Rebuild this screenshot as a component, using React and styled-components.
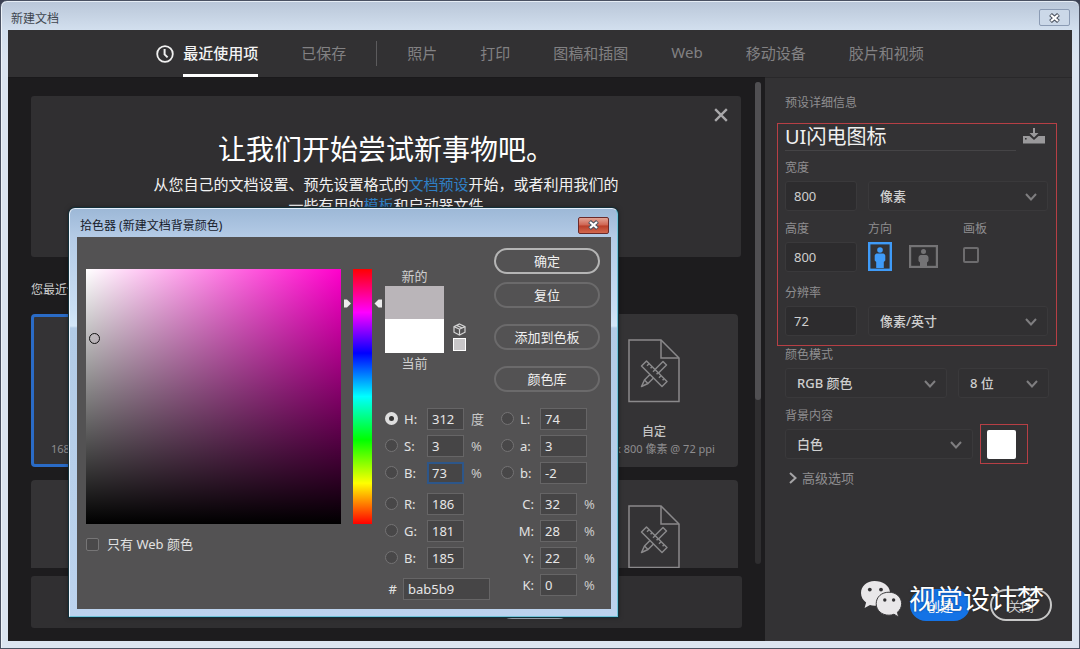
import React from "react";
import styled, { createGlobalStyle, css } from "styled-components";

const GlobalStyle = createGlobalStyle`
  * {
    box-sizing: border-box;
  }
  body {
    margin: 0;
    background: #3b4052;
    font-family: "Noto Sans", "Noto Sans CJK SC", sans-serif;
    font-size: 12px;
  }
  button, input, select {
    font-family: inherit;
    margin: 0;
  }
  button {
    padding: 0;
    cursor: pointer;
  }
  h1, h2, p {
    margin: 0;
    font-weight: 400;
  }
`;

const Window = styled.div`
  position: relative;
  display: flex;
  flex-direction: column;
  height: 100vh;
  padding: 0 7px 7px;
  border: 1px solid #4a5162;
  border-radius: 7px 7px 0 0;
  background: linear-gradient(#b9c6d8 0px, #d2dfee 29px, #dbe4f0 60px);
  box-shadow: inset 0 1px 0 #e6edf5, inset 1px 0 0 #eef3f9;
`;

const TitleBar = styled.header`
  display: flex;
  flex-shrink: 0;
  align-items: center;
  justify-content: space-between;
  height: 29px;
  padding: 4px 2px 0 3px;
  color: #40464f;
`;

const WindowClose = styled.button`
  display: flex;
  align-items: center;
  justify-content: center;
  width: 31px;
  height: 17px;
  border: 1px solid #8b9bb4;
  border-radius: 2px;
  background: #cbd8e8;
`;

const Tabs = styled.nav`
  display: flex;
  flex-shrink: 0;
  justify-content: center;
  align-items: stretch;
  gap: 43px;
  height: 47px;
  background: #323133;
`;

const Tab = styled.a`
  display: flex;
  align-items: center;
  border-bottom: 3px solid transparent;
  color: #828183;
  font-size: 15px;
  text-decoration: none;
  white-space: nowrap;
  ${(props) =>
    props.$active &&
    css`
      color: #f4f4f4;
      font-weight: 500;
      border-bottom-color: #fff;
    `}
`;

const ActiveTab = styled.div`
  display: flex;
  gap: 9px;
  & > svg {
    align-self: center;
  }
`;

const Divider = styled.span`
  align-self: center;
  width: 1px;
  height: 25px;
  margin: 0 -13px;
  background: #5c5b5d;
`;

const Body = styled.div`
  display: grid;
  grid-template-columns: 1fr 307px;
  flex: 1;
  min-height: 0;
`;

const Main = styled.main`
  display: flex;
  flex-direction: column;
  min-height: 0;
  padding: 0 0 13px 23px;
  border-top: 1px solid #1a191b;
  background: #1d1c1e;
`;

const ListArea = styled.div`
  display: flex;
  flex: 1;
  min-height: 0;
`;

const List = styled.div`
  flex: 1;
  overflow: hidden;
  padding-top: 18px;
`;

const ScrollTrack = styled.div`
  width: 6px;
  margin: 4px 4px 4px 14px;
  border-radius: 3px;
  background: #2f2e30;
`;

const ScrollThumb = styled.div`
  height: 66%;
  border-radius: 3px;
  background: #504f52;
`;

const Banner = styled.section`
  position: relative;
  height: 161px;
  padding-top: 32px;
  border-radius: 3px;
  background: #302f31;
  color: #f2f2f2;
  text-align: center;
`;

const BannerTitle = styled.h1`
  font-size: 28px;
  line-height: 42px;
  color: #fff;
`;

const BannerText = styled.p`
  width: 500px;
  margin: 4px auto 0;
  font-size: 15px;
  line-height: 21px;
  a {
    color: #2f7fc4;
    text-decoration: none;
  }
`;

const BannerClose = styled.button`
  position: absolute;
  top: 12px;
  right: 13px;
  display: flex;
  border: 0;
  background: none;
`;

const RecentTitle = styled.h2`
  margin: 23px 0 14px;
  color: #cfcfcf;
  font-size: 12px;
  line-height: 20px;
`;

const Cards = styled.div`
  display: grid;
  grid-template-columns: repeat(4, 1fr);
  gap: 13px 12px;
  margin-right: 3px;
`;

const Card = styled.button`
  display: flex;
  flex-direction: column;
  align-items: center;
  height: 153px;
  padding-top: ${(props) => (props.$selected ? "22px" : "25px")};
  border: ${(props) => (props.$selected ? "3px solid #2a6bc6" : "0")};
  border-radius: 4px;
  background: #343335;
  color: #8e8d8f;
  font-size: 12px;
  white-space: nowrap;
`;

const CardName = styled.span`
  margin-top: 20px;
  color: #c4c4c4;
  font-weight: 500;
  line-height: 18px;
`;

const CardSize = styled.span`
  line-height: 16px;
  font-size: 11px;
`;

const TemplateBar = styled.form`
  display: flex;
  align-items: center;
  justify-content: flex-end;
  height: 52px;
  margin: 8px 23px 0 0;
  padding-right: 167px;
  border-radius: 3px;
  background: #302f31;
`;

const GoButton = styled.button`
  width: 80px;
  height: 34px;
  border: 2px solid #a9b3bd;
  border-radius: 17px;
  background: none;
  color: #ccc;
`;

const Panel = styled.aside`
  display: flex;
  flex-direction: column;
  padding-top: 16px;
  border-top: 1px solid #29282a;
  background: #333234;
  color: #8f8e90;
`;

const PanelHeading = styled.h2`
  padding: 0 20px;
  font-size: 12px;
  line-height: 18px;
`;

const Marked = styled.div`
  margin: 11px 15px 0 12px;
  padding: 0 8px 0 7px;
  border: 1px solid #b73f45;
`;

const NameRow = styled.div`
  display: flex;
  align-items: center;
  justify-content: space-between;
  gap: 7px;
  height: 27px;
  margin-bottom: 8px;
`;

const NameInput = styled.input`
  flex: 1;
  min-width: 0;
  height: 27px;
  padding: 0 0 4px;
  border: 0;
  border-bottom: 1px solid #454446;
  background: none;
  color: #f0f0f0;
  font-size: 20px;
  outline: none;
`;

const SaveButton = styled.button`
  display: flex;
  margin: 0 3px 4px 0;
  border: 0;
  background: none;
`;

const FieldRow = styled.div`
  display: grid;
  grid-template-columns: ${(props) => props.$columns || "72px 1fr"};
  gap: 11px;
  align-items: end;
  margin-bottom: 9px;
`;

const OrientationRow = styled(FieldRow)`
  align-items: start;
  padding-bottom: 3px;
`;

const Rest = styled.div`
  padding: 0 23px 0 20px;
`;

const Field = styled.div`
  display: flex;
  flex-direction: column;
  gap: 4px;
  min-width: 0;
`;

const Label = styled.label`
  line-height: 18px;
`;

const box = css`
  width: 100%;
  height: 30px;
  border: 1px solid #3a393b;
  border-radius: 3px;
  background: #2d2c2e;
  color: #cfcfcf;
  font-size: 13px;
  outline: none;
`;

const NumberInput = styled.input`
  ${box}
  padding: 0 8px;
`;

const SelectWrap = styled.div`
  position: relative;
  min-width: 0;
  flex: 1;
  svg {
    position: absolute;
    right: 11px;
    top: 12px;
    pointer-events: none;
  }
`;

const SelectBox = styled.select`
  ${box}
  padding: 0 11px;
  appearance: none;
  background: #313032;
  font-weight: 500;
`;

const Orientations = styled.div`
  display: flex;
  align-items: center;
  gap: 17px;
  height: 29px;
`;

const OrientationButton = styled.button`
  display: flex;
  border: 0;
  background: none;
  color: ${(props) => (props.$on ? "#3f9bf8" : "#747375")};
`;

const Artboard = styled.input`
  appearance: none;
  width: 16px;
  height: 16px;
  border: 2px solid #6d6c6e;
  border-radius: 2px;
  && {
    margin-top: 5px;
  }
`;

const BackgroundRow = styled.div`
  display: flex;
  align-items: center;
  gap: 7px;
`;

const SwatchMark = styled.div`
  display: flex;
  align-items: center;
  justify-content: center;
  width: 48px;
  height: 40px;
  margin: -5px 21px -5px 0;
  padding-right: 5px;
  border: 1px solid #b73f45;
`;

const Swatch = styled.button`
  width: 29px;
  height: 29px;
  border: 0;
  border-radius: 2px;
  background: #fff;
`;

const Advanced = styled.button`
  display: flex;
  align-items: center;
  gap: 4px;
  padding: 0 3px;
  border: 0;
  background: none;
  color: #8f8e90;
  font-size: 13px;
  line-height: 20px;
`;

const Actions = styled.footer`
  display: flex;
  justify-content: flex-end;
  gap: 20px;
  margin-top: auto;
  padding: 0 20px 20px;
`;

const ActionButton = styled.button`
  width: ${(props) => (props.$primary ? "60px" : "62px")};
  height: 32px;
  border: 2px solid ${(props) => (props.$primary ? "#1473e6" : "#c8c8c8")};
  border-radius: 16px;
  background: ${(props) => (props.$primary ? "#1473e6" : "none")};
  color: ${(props) => (props.$primary ? "#fff" : "#c8c8c8")};
  font-size: 13px;
`;

const Watermark = styled.div`
  position: absolute;
  right: 35px;
  bottom: 29px;
  display: flex;
  align-items: center;
  gap: 7px;
  color: #fff;
  font-size: 27px;
  line-height: 40px;
  text-shadow: 0 0 2px rgba(0, 0, 0, 0.5);
  pointer-events: none;
`;

/* colour picker */

const Dialog = styled.section`
  position: absolute;
  left: 68px;
  top: 207px;
  width: 549px;
  padding: 0 6px 7px 7px;
  border: 1px solid #6fc3d8;
  border-top-color: #e4eefa;
  border-left-color: #eef6ff;
  border-radius: 6px 6px 0 0;
  background: linear-gradient(#9db8d7 0px, #b4cbe6 28px, #c9def3 100px, #d3e6f8 117px, #b2cbe6 119px, #bcd3ee 100%);
  box-shadow: 0 0 0 1px #12303a, 0 0 5px rgba(0, 0, 0, 0.5);
`;

const DialogTitle = styled.header`
  display: flex;
  align-items: center;
  justify-content: space-between;
  height: 28px;
  padding: 4px 2px 0 3px;
  color: #17202c;
`;

const DialogClose = styled(WindowClose)`
  border-color: #6b2a2a;
  background: linear-gradient(#e2a496 0%, #cf6350 48%, #b93d28 52%, #d2694f 100%);
`;

const DialogBody = styled.div`
  display: flex;
  height: 372px;
  padding: 0 11px 0 9px;
  background: #535253;
  color: #e2e2e2;
  font-size: 13px;
`;

const FieldColumn = styled.div`
  padding-top: 32px;
`;

const ColorField = styled.div`
  position: relative;
  width: 255px;
  height: 255px;
  background: linear-gradient(to top, #000, transparent), linear-gradient(to right, #fff, #ff00cc);
`;

const Marker = styled.span`
  position: absolute;
  width: 11px;
  height: 11px;
  margin: -6px 0 0 -6px;
  border: 1px solid #111;
  border-radius: 50%;
`;

const WebOnly = styled.label`
  display: flex;
  align-items: center;
  gap: 8px;
  margin-top: 10px;
  line-height: 20px;
`;

const WebCheck = styled.input`
  appearance: none;
  width: 13px;
  height: 13px;
  border: 1px solid #767576;
  border-radius: 2px;
  background: #4a494a;
`;

const HueColumn = styled.div`
  position: relative;
  padding: 32px 13px 0 12px;
`;

const HueStrip = styled.div`
  width: 19px;
  height: 255px;
  background: linear-gradient(#f00, #f0f 17%, #00f 33%, #0ff 50%, #0f0 67%, #ff0 84%, #f00);
`;

const HueArrows = styled.svg`
  position: absolute;
  left: 3px;
  top: 62px;
`;

const Controls = styled.div`
  flex: 1;
  padding-top: 11px;
`;

const TopControls = styled.div`
  display: flex;
  height: 144px;
  margin-bottom: 13px;
`;

const Compare = styled.div`
  width: 59px;
  padding-top: 18px;
  color: #cfcfcf;
  text-align: center;
  line-height: 20px;
`;

const CompareColor = styled.div`
  height: ${(props) => props.$height};
  background: ${(props) => props.$color};
`;

const Warnings = styled.div`
  display: flex;
  flex-direction: column;
  gap: 2px;
  padding: 75px 0 0 9px;
`;

const WebSwatch = styled.button`
  width: 13px;
  height: 13px;
  border: 1px solid #fff;
  background: #c8c6c8;
`;

const DialogButtons = styled.div`
  display: flex;
  flex-direction: column;
  gap: 16px;
  margin-left: auto;
`;

const ButtonPair = styled.div`
  display: flex;
  flex-direction: column;
  gap: 8px;
`;

const PillButton = styled.button`
  width: 106px;
  height: 26px;
  border: ${(props) => (props.$default ? "2px solid #b5b5b5" : "2px solid #6b6a6b")};
  border-radius: 13px;
  background: none;
  color: #f0f0f0;
  font-size: 13px;
  line-height: 20px;
`;

const Values = styled.div`
  display: flex;
  justify-content: space-between;
`;

const ValueColumn = styled.div`
  width: ${(props) => props.$width};
`;

const ValueGroup = styled.div`
  margin-bottom: 4px;
`;

const ValueRow = styled.div`
  display: grid;
  grid-template-columns: ${(props) => props.$columns};
  align-items: center;
  height: 27px;
`;

const Radio = styled.input`
  appearance: none;
  width: 13px;
  height: 13px;
  border: 1px solid #747374;
  border-radius: 50%;
  background: #484748;
  &:checked {
    border: 4px solid #dedede;
    background: #333;
  }
`;

const ValueLabel = styled.label`
  text-align: ${(props) => (props.$right ? "right" : "left")};
  padding-right: ${(props) => (props.$right ? "6px" : "0")};
`;

const ValueInput = styled.input`
  width: ${(props) => props.$width || "37px"};
  height: 22px;
  padding: 0 4px;
  border: 1px solid #666566;
  background: #464546;
  color: #e6e6e6;
  font-size: 13px;
  outline: none;
  ${(props) =>
    props.$focused &&
    css`
      border: 2px solid #2d5689;
      padding: 0 3px;
    `}
`;

const Unit = styled.span`
  padding-left: 7px;
  color: #c9c9c9;
`;

const Cross = ({ size = 12, color = "#a9a8aa", width = 2 }) => (
  <svg width={size} height={size} viewBox="0 0 12 12" fill="none" stroke={color} strokeWidth={width}>
    <path d="M1 1L11 11M11 1L1 11" />
  </svg>
);

const GlassCross = () => (
  <svg width="13" height="10" viewBox="0 0 13 10" fill="none">
    <path d="M2.5 1.5L10.5 8.5M10.5 1.5L2.5 8.5" stroke="#4b5361" strokeWidth="4.2" />
    <path d="M3 2L10 8M10 2L3 8" stroke="#fff" strokeWidth="2.2" />
  </svg>
);

const Chevron = () => (
  <svg width="12" height="8" viewBox="0 0 12 8" fill="none" stroke="#7f7e80" strokeWidth="2">
    <path d="M1 1L6 6.5L11 1" />
  </svg>
);

const Clock = () => (
  <svg width="18" height="18" viewBox="0 0 18 18" fill="none" stroke="#f0f0f0">
    <circle cx="9" cy="9" r="7.8" strokeWidth="1.8" />
    <path d="M8.6 4V9.4L11.6 12.4" strokeWidth="2" />
  </svg>
);

const DocIcon = () => (
  <svg width="52" height="64" viewBox="0 0 52 64" fill="none" stroke="#8a898b" strokeWidth="1.5">
    <path d="M1 1H33L51 19V62.5H1Z" />
    <path d="M33 1V19H51" />
    <path d="M35 22.5L38.5 26L20 44.5L13.5 47.5L16.5 41L35 22.5Z" strokeLinejoin="round" />
    <path d="M16.5 41L20 44.5" />
    <path
      d="M18.5 22L39 42.5L34 47.5L13.5 27Z"
      fill="#343335"
      strokeLinejoin="round"
    />
    <path d="M21 24.8L19 26.8M24 27.8L22.6 29.2M27 30.8L25 32.8M30 33.8L28.6 35.2M33 36.8L31 38.8M36 39.8L34.6 41.2" />
  </svg>
);

const SaveIcon = () => (
  <svg width="22" height="16" viewBox="0 0 22 16" fill="#9a999b">
    <path d="M10 0H12V5H15.5L11 9.5L6.5 5H10Z" />
    <path d="M0 8H6.5L11 12L15.5 8H22V15.5H0ZM2 10V11.6H3.6V10Z" fillRule="evenodd" />
  </svg>
);

const Portrait = () => (
  <svg width="24" height="29" viewBox="0 0 24 29" fill="currentColor">
    <rect x="1.2" y="1.2" width="21.6" height="26.6" fill="none" stroke="currentColor" strokeWidth="2.4" />
    <circle cx="12" cy="8" r="2.8" />
    <path d="M8.5 11.5H15.5Q17.3 12 17.3 14V18.5L15.8 20V26H8.2V20L6.7 18.5V14Q6.7 12 8.5 11.5Z" />
  </svg>
);

const Landscape = () => (
  <svg width="29" height="23" viewBox="0 0 29 23" fill="currentColor">
    <rect x="1.1" y="1.1" width="26.8" height="20.8" fill="none" stroke="currentColor" strokeWidth="2.2" />
    <circle cx="14.5" cy="6.6" r="2.5" />
    <path d="M11.5 10H17.5Q19.5 10.5 19.5 12.5V16L18 17.5V21H11V17.5L9.5 16V12.5Q9.5 10.5 11.5 10Z" />
  </svg>
);

const Cube = () => (
  <svg width="13" height="13" viewBox="0 0 13 13" fill="none" stroke="#d5d5d5" strokeWidth="1.2">
    <path d="M6.5 1L12 3.6V9.2L6.5 12L1 9.2V3.6Z" />
    <path d="M1 3.6L6.5 6.2L12 3.6M6.5 6.2V12M3.6 2.4L9.2 5" />
  </svg>
);

const WeChat = () => (
  <svg width="42" height="38" viewBox="0 0 42 38">
    <path
      d="M14.5 1C6.8 1 1 6.1 1 13C1 17 3 20.2 6.1 22.5L4.6 28L10 25Q13 26 17.5 25.5L30 12C29.5 5.5 22.5 1 14.5 1Z"
      fill="#e9e7e9"
    />
    <path
      d="M29 12.2C21.5 12.2 16.2 17 16.2 23.7C16.2 30.4 21.7 35.2 29 35.2Q31.5 35.2 34 34.2L38.5 37L37.5 32.2C40 30 41.6 27.2 41.6 23.7C41.6 17 36 12.2 29 12.2Z"
      fill="#e9e7e9"
      stroke="#3a393b"
      strokeWidth="1"
    />
    <g fill="#333234">
      <circle cx="9.8" cy="9.6" r="1.9" />
      <circle cx="21" cy="9.6" r="1.9" />
      <circle cx="24.8" cy="20" r="1.7" />
      <circle cx="33.6" cy="20" r="1.7" />
    </g>
  </svg>
);

const tabs = ["照片", "打印", "图稿和插图", "Web", "移动设备", "胶片和视频"];

const cards = [
  { id: 1, size: "168 x 256 像素 @ 300 ppi", selected: true },
  { id: 2, size: "800 x 800 像素 @ 72 ppi" },
  { id: 3, size: "800 x 800 像素 @ 72 ppi" },
  { id: 4, size: "800 x 800 像素 @ 72 ppi" },
  { id: 5, size: "800 x 800 像素 @ 72 ppi" },
  { id: 6, size: "800 x 800 像素 @ 72 ppi" },
  { id: 7, size: "800 x 800 像素 @ 72 ppi" },
  { id: 8, size: "800 x 800 像素 @ 72 ppi" },
];

const hsb = [
  { id: "hue", label: "H:", value: "312", unit: "度", checked: true },
  { id: "sat", label: "S:", value: "3", unit: "%" },
  { id: "bri", label: "B:", value: "73", unit: "%", focused: true },
];
const rgb = [
  { id: "red", label: "R:", value: "186" },
  { id: "green", label: "G:", value: "181" },
  { id: "blue", label: "B:", value: "185" },
];
const lab = [
  { id: "lab-l", label: "L:", value: "74" },
  { id: "lab-a", label: "a:", value: "3" },
  { id: "lab-b", label: "b:", value: "-2" },
];
const cmyk = [
  { id: "cyan", label: "C:", value: "32" },
  { id: "magenta", label: "M:", value: "28" },
  { id: "yellow", label: "Y:", value: "22" },
  { id: "key", label: "K:", value: "0" },
];

const RadioRow = ({ item, columns, width }) => (
  <ValueRow $columns={columns}>
    <Radio type="radio" name="channel" aria-label={item.label} defaultChecked={item.checked} />
    <ValueLabel htmlFor={item.id}>{item.label}</ValueLabel>
    <ValueInput id={item.id} defaultValue={item.value} $width={width} $focused={item.focused} />
    {item.unit && <Unit>{item.unit}</Unit>}
  </ValueRow>
);

const Select = ({ id, value, label }) => (
  <SelectWrap>
    <SelectBox id={id} aria-label={label} defaultValue={value}>
      <option>{value}</option>
    </SelectBox>
    <Chevron />
  </SelectWrap>
);

const ColorPicker = () => (
  <Dialog role="dialog" aria-label="拾色器">
    <DialogTitle>
      拾色器 (新建文档背景颜色)
      <DialogClose aria-label="关闭拾色器">
        <GlassCross />
      </DialogClose>
    </DialogTitle>
    <DialogBody>
      <FieldColumn>
        <ColorField>
          <Marker style={{ left: "3.5%", top: "27.5%" }} />
        </ColorField>
        <WebOnly>
          <WebCheck type="checkbox" />
          只有 Web 颜色
        </WebOnly>
      </FieldColumn>
      <HueColumn>
        <HueStrip />
        <HueArrows width="38" height="9" viewBox="0 0 38 9" fill="#ececec">
          <path d="M0 0.5H3L7 4.5L3 8.5H0Z" />
          <path d="M38 0.5H34.5L30.5 4.5L34.5 8.5H38Z" />
        </HueArrows>
      </HueColumn>
      <Controls>
        <TopControls>
          <Compare>
            新的
            <CompareColor $height="33px" $color="#bab5b9" />
            <CompareColor $height="34px" $color="#fff" />
            当前
          </Compare>
          <Warnings>
            <Cube />
            <WebSwatch aria-label="Web 安全色" />
          </Warnings>
          <DialogButtons>
            <ButtonPair>
              <PillButton $default>确定</PillButton>
              <PillButton>复位</PillButton>
            </ButtonPair>
            <PillButton>添加到色板</PillButton>
            <PillButton>颜色库</PillButton>
          </DialogButtons>
        </TopControls>
        <Values>
          <ValueColumn $width="106px">
            <ValueGroup>
              {hsb.map((item) => (
                <RadioRow key={item.id} item={item} columns="19px 23px 37px 1fr" />
              ))}
            </ValueGroup>
            <ValueGroup>
              {rgb.map((item) => (
                <RadioRow key={item.id} item={item} columns="19px 23px 37px 1fr" />
              ))}
            </ValueGroup>
            <ValueRow $columns="18px 1fr">
              <ValueLabel htmlFor="hex" $right>
                #
              </ValueLabel>
              <ValueInput id="hex" defaultValue="bab5b9" $width="87px" />
            </ValueRow>
          </ValueColumn>
          <ValueColumn $width="99px">
            <ValueGroup>
              {lab.map((item) => (
                <RadioRow key={item.id} item={item} columns="19px 20px 1fr" width="47px" />
              ))}
            </ValueGroup>
            {cmyk.map((item) => (
              <ValueRow key={item.id} $columns="39px 37px 1fr">
                <ValueLabel htmlFor={item.id} $right>
                  {item.label}
                </ValueLabel>
                <ValueInput id={item.id} defaultValue={item.value} />
                <Unit>%</Unit>
              </ValueRow>
            ))}
          </ValueColumn>
        </Values>
      </Controls>
    </DialogBody>
  </Dialog>
);

const Details = () => (
  <Panel>
    <PanelHeading>预设详细信息</PanelHeading>
    <Marked>
      <NameRow>
        <NameInput aria-label="名称" defaultValue="UI闪电图标" />
        <SaveButton aria-label="保存预设">
          <SaveIcon />
        </SaveButton>
      </NameRow>
      <FieldRow>
        <Field>
          <Label htmlFor="width">宽度</Label>
          <NumberInput id="width" defaultValue="800" />
        </Field>
        <Select label="单位" value="像素" />
      </FieldRow>
      <OrientationRow $columns="72px 84px 1fr">
        <Field>
          <Label htmlFor="height">高度</Label>
          <NumberInput id="height" defaultValue="800" />
        </Field>
        <Field>
          <Label as="span">方向</Label>
          <Orientations>
            <OrientationButton $on aria-label="纵向" aria-pressed="true">
              <Portrait />
            </OrientationButton>
            <OrientationButton aria-label="横向" aria-pressed="false">
              <Landscape />
            </OrientationButton>
          </Orientations>
        </Field>
        <Field>
          <Label htmlFor="artboard">画板</Label>
          <Artboard id="artboard" type="checkbox" />
        </Field>
      </OrientationRow>
      <FieldRow>
        <Field>
          <Label htmlFor="resolution">分辨率</Label>
          <NumberInput id="resolution" defaultValue="72" />
        </Field>
        <Select label="分辨率单位" value="像素/英寸" />
      </FieldRow>
    </Marked>
    <Rest>
      <FieldRow $columns="16fr 9fr">
        <Field>
          <Label htmlFor="mode">颜色模式</Label>
          <Select id="mode" value="RGB 颜色" />
        </Field>
        <Select label="位深度" value="8 位" />
      </FieldRow>
      <FieldRow $columns="1fr">
        <Field>
          <Label htmlFor="background">背景内容</Label>
          <BackgroundRow>
            <Select id="background" value="白色" />
            <SwatchMark>
              <Swatch aria-label="背景颜色" />
            </SwatchMark>
          </BackgroundRow>
        </Field>
      </FieldRow>
      <Advanced>
        <svg width="10" height="12" viewBox="0 0 10 12" fill="none" stroke="#a5a4a6" strokeWidth="2">
          <path d="M2 1L7.5 6L2 11" />
        </svg>
        高级选项
      </Advanced>
    </Rest>
    <Actions>
      <ActionButton $primary>创建</ActionButton>
      <ActionButton>关闭</ActionButton>
    </Actions>
  </Panel>
);

const App = () => {
  return (
    <>
      <GlobalStyle />
      <Window>
        <TitleBar>
          新建文档
          <WindowClose aria-label="关闭窗口">
            <GlassCross />
          </WindowClose>
        </TitleBar>
        <Tabs>
          <ActiveTab>
            <Clock />
            <Tab href="#recent" $active>
              最近使用项
            </Tab>
          </ActiveTab>
          <Tab href="#saved">已保存</Tab>
          <Divider />
          {tabs.map((tab) => (
            <Tab key={tab} href={`#${tab}`}>
              {tab}
            </Tab>
          ))}
        </Tabs>
        <Body>
          <Main>
            <ListArea>
              <List>
                <Banner>
                  <BannerTitle>让我们开始尝试新事物吧。</BannerTitle>
                  <BannerText>
                    从您自己的文档设置、预先设置格式的<a href="#presets">文档预设</a>开始，或者利用我们的
                    <br />
                    一些有用的<a href="#templates">模板</a>和启动器文件
                  </BannerText>
                  <BannerClose aria-label="关闭提示">
                    <Cross size={14} />
                  </BannerClose>
                </Banner>
                <RecentTitle>您最近使用的项目</RecentTitle>
                <Cards>
                  {cards.map((card) => (
                    <Card key={card.id} $selected={card.selected}>
                      <DocIcon />
                      <CardName>自定</CardName>
                      <CardSize>{card.size}</CardSize>
                    </Card>
                  ))}
                </Cards>
              </List>
              <ScrollTrack>
                <ScrollThumb />
              </ScrollTrack>
            </ListArea>
            <TemplateBar>
              <GoButton type="button">前往</GoButton>
            </TemplateBar>
          </Main>
          <Details />
        </Body>
        <ColorPicker />
        <Watermark>
          <WeChat />
          视觉设计梦
        </Watermark>
      </Window>
    </>
  );
};

export default App;
